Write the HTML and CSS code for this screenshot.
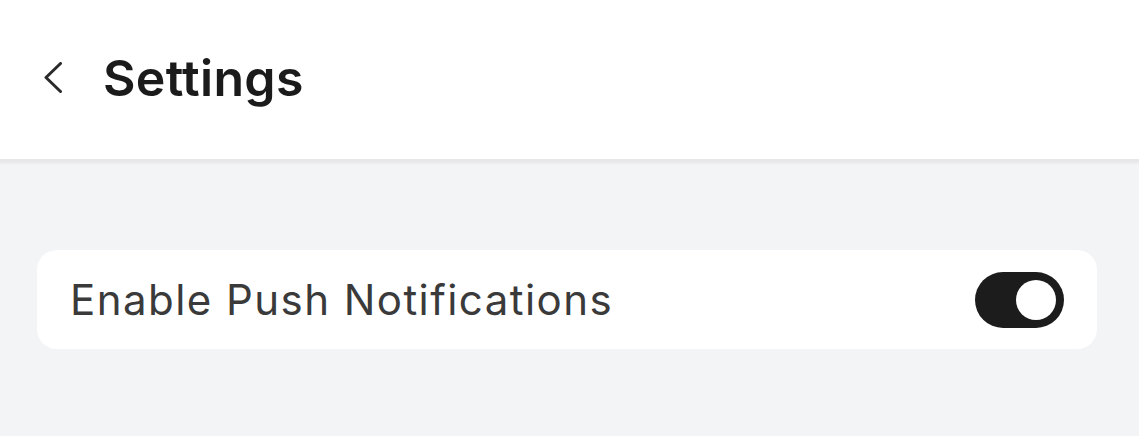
FILE: index.html
```html
<!DOCTYPE html>
<html lang="en">
<head>
<meta charset="utf-8">
<title>Settings</title>
<link rel="stylesheet" href="styles.css">
</head>
<body>
<div class="app">
  <header class="header">
    <button class="back" aria-label="Back">
      <svg width="18" height="31" viewBox="0 0 18 31" fill="none">
        <path d="M16.5 1.5 L2 15.5 L16.5 29.5" stroke="#2a2a2a" stroke-width="3" stroke-linecap="round" stroke-linejoin="round"/>
      </svg>
    </button>
    <h1 class="title">Settings</h1>
  </header>
  <main class="content">
    <div class="card">
      <span class="label">Enable Push Notifications</span>
      <div class="toggle on"><div class="knob"></div></div>
    </div>
  </main>
</div>
</body>
</html>
```
FILE: styles.css
```css
* { box-sizing: border-box; }
html, body { margin: 0; padding: 0; background: #ffffff; }
body { font-family: Inter, "Noto Sans", sans-serif; }
.app {
  width: 1139px;
  height: 436px;
  background: #f3f4f6;
  display: flex;
  flex-direction: column;
  overflow: hidden;
}
.header {
  height: 162px;
  flex: none;
  background: #ffffff;
  border-bottom: 3px solid #e7e7e9;
  box-shadow: 0 2px 2px rgba(0,0,0,0.04);
  display: flex;
  align-items: center;
  padding: 0 0 4px 44px;
  gap: 41px;
}
.back {
  border: 0;
  background: none;
  padding: 0;
  width: 18px;
  height: 31px;
  display: flex;
}
.title {
  margin: 0;
  font-size: 50px;
  font-weight: 600;
  color: #1b1b1b;
  letter-spacing: 0.3px;
  line-height: 1;
}
.content {
  padding: 88px 42px 0 37px;
}
.card {
  height: 99px;
  background: #ffffff;
  border-radius: 20px;
  display: flex;
  align-items: center;
  justify-content: space-between;
  padding: 0 33px 0 33px;
}
.label {
  font-size: 42px;
  color: #3a3a3a;
  line-height: 1;
  letter-spacing: 1.45px;
}
.toggle {
  width: 89px;
  height: 56px;
  border-radius: 28px;
  background: #1c1c1c;
  display: flex;
  align-items: center;
  justify-content: flex-end;
  padding: 0 8px;
}
.knob {
  width: 40px;
  height: 40px;
  border-radius: 50%;
  background: #ffffff;
}
```
